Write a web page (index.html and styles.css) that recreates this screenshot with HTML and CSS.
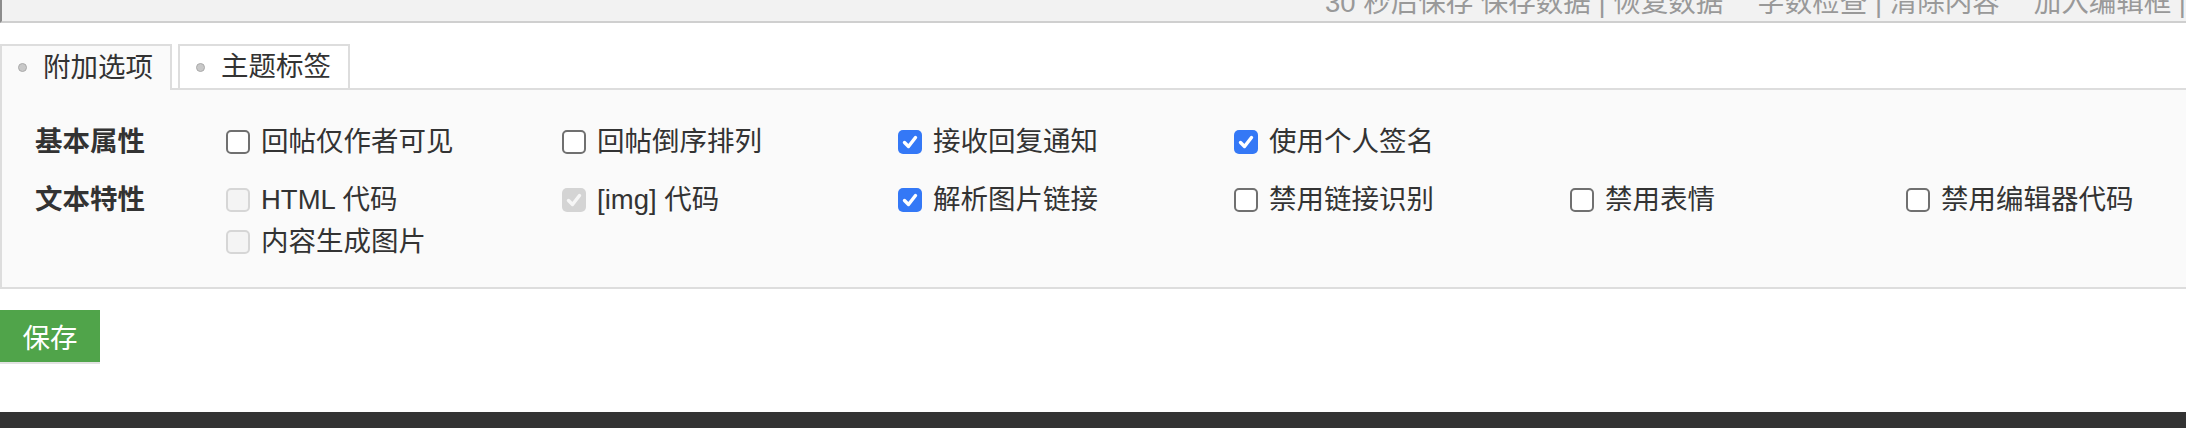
FILE: index.html
```html
<!DOCTYPE html>
<html>
<head>
	<meta charset="UTF-8">
	<meta name="viewport" content="width=device-width, initial-scale=1.0">
	<title>发帖选项</title>
	<link rel="stylesheet" href="styles.css">
</head>
<body>
	<div class="editor-bar">
		<div class="editor-links">
			<span class="group">30 秒后保存 保存数据 | 恢复数据</span>
			<span class="group">字数检查 | 清除内容</span>
			<span class="group">加入编辑框 |</span>
		</div>
	</div>

	<div class="tabs">
		<div class="tab active"><span class="dot"></span>附加选项</div>
		<div class="tab"><span class="dot"></span>主题标签</div>
	</div>

	<div class="panel">
		<div class="option-row">
			<div class="row-label">基本属性</div>
			<div class="options">
				<label class="option"><span class="box"></span>回帖仅作者可见</label>
				<label class="option"><span class="box"></span>回帖倒序排列</label>
				<label class="option"><span class="box checked"><svg viewBox="0 0 24 24"><path d="M6.5 12.5 L10.5 16.5 L17.5 7.5"/></svg></span>接收回复通知</label>
				<label class="option"><span class="box checked"><svg viewBox="0 0 24 24"><path d="M6.5 12.5 L10.5 16.5 L17.5 7.5"/></svg></span>使用个人签名</label>
			</div>
		</div>
		<div class="option-row">
			<div class="row-label">文本特性</div>
			<div class="options">
				<label class="option"><span class="box disabled"></span>HTML 代码</label>
				<label class="option"><span class="box disabled checked"><svg viewBox="0 0 24 24"><path d="M6.5 12.5 L10.5 16.5 L17.5 7.5"/></svg></span>[img] 代码</label>
				<label class="option"><span class="box checked"><svg viewBox="0 0 24 24"><path d="M6.5 12.5 L10.5 16.5 L17.5 7.5"/></svg></span>解析图片链接</label>
				<label class="option"><span class="box"></span>禁用链接识别</label>
				<label class="option"><span class="box"></span>禁用表情</label>
				<label class="option"><span class="box"></span>禁用编辑器代码</label>
				<label class="option"><span class="box disabled"></span>内容生成图片</label>
			</div>
		</div>
	</div>

	<button class="save-btn">保存</button>

	<div class="footer"></div>
</body>
</html>
```

FILE: styles.css
```css
html, body {
	overflow: hidden;
}

body {
	margin: 0;
	font-family: 'Liberation Sans', 'Noto Sans CJK SC', sans-serif;
	font-size: 27.5px;
	color: #333;
	background-color: #fff;
}

.editor-bar {
	height: 21px;
	background-color: #f2f2f2;
	border-left: 2px solid #8c8c8c;
	border-bottom: 2px solid #cfcfcf;
	overflow: hidden;
}

.editor-links {
	display: flex;
	justify-content: flex-end;
	margin-top: -11px;
	line-height: 27px;
	color: #999;
	white-space: pre;
}

.editor-links .group {
	margin-left: 34px;
}

.tabs {
	display: flex;
	gap: 6px;
	margin-top: 21px;
}

.tab {
	display: flex;
	align-items: center;
	height: 42px;
	padding: 0 17px 0 16px;
	border: 2px solid #ddd;
	border-bottom: 0;
	background-color: #fff;
	line-height: 42px;
}

.tab.active {
	position: relative;
	z-index: 1;
	height: 44px;
	margin-bottom: -2px;
	background-color: #fafafa;
}

.tab.active .dot {
	margin-bottom: 2px;
}

.dot {
	width: 7px;
	height: 7px;
	margin-right: 16px;
	border-radius: 50%;
	background-color: #c8c8c8;
	border: 1px solid #aaa;
}

.panel {
	padding: 31px 0 24px 33px;
	background-color: #fafafa;
	border-top: 2px solid #ddd;
	border-left: 2px solid #ddd;
	border-bottom: 2px solid #ddd;
}

.option-row {
	display: flex;
	line-height: 42px;
}

.option-row + .option-row {
	margin-top: 16px;
}

.row-label {
	flex: none;
	width: 191px;
	font-weight: bold;
}

.options {
	display: grid;
	grid-template-columns: repeat(6, 336px);
}

.option {
	display: flex;
	align-items: center;
	white-space: nowrap;
}

.box {
	flex: none;
	box-sizing: border-box;
	width: 24px;
	height: 24px;
	margin-right: 11px;
	border: 2px solid #707070;
	border-radius: 5px;
	background-color: #fff;
}

.box svg {
	display: block;
	width: 100%;
	height: 100%;
	fill: none;
	stroke: #fff;
	stroke-width: 3.4;
	stroke-linecap: round;
	stroke-linejoin: round;
}

.box.checked {
	border: none;
	background-color: #3478f6;
}

.box.disabled {
	border-color: #d6d6d6;
	background-color: #f4f4f4;
}

.box.disabled.checked {
	background-color: #d4d4d4;
}

.box.disabled.checked svg {
	stroke: #f6f6f6;
}

.save-btn {
	display: block;
	width: 100px;
	height: 52px;
	margin-top: 21px;
	padding: 0;
	border: none;
	background-color: #50a44a;
	box-shadow: 0 2px 0 #e2e2e2;
	color: #fff;
	font-family: 'Liberation Sans', 'Noto Sans CJK SC', sans-serif;
	font-size: 27.5px;
	cursor: pointer;
}

.footer {
	height: 80px;
	margin-top: 50px;
	background-color: #333;
}
```
